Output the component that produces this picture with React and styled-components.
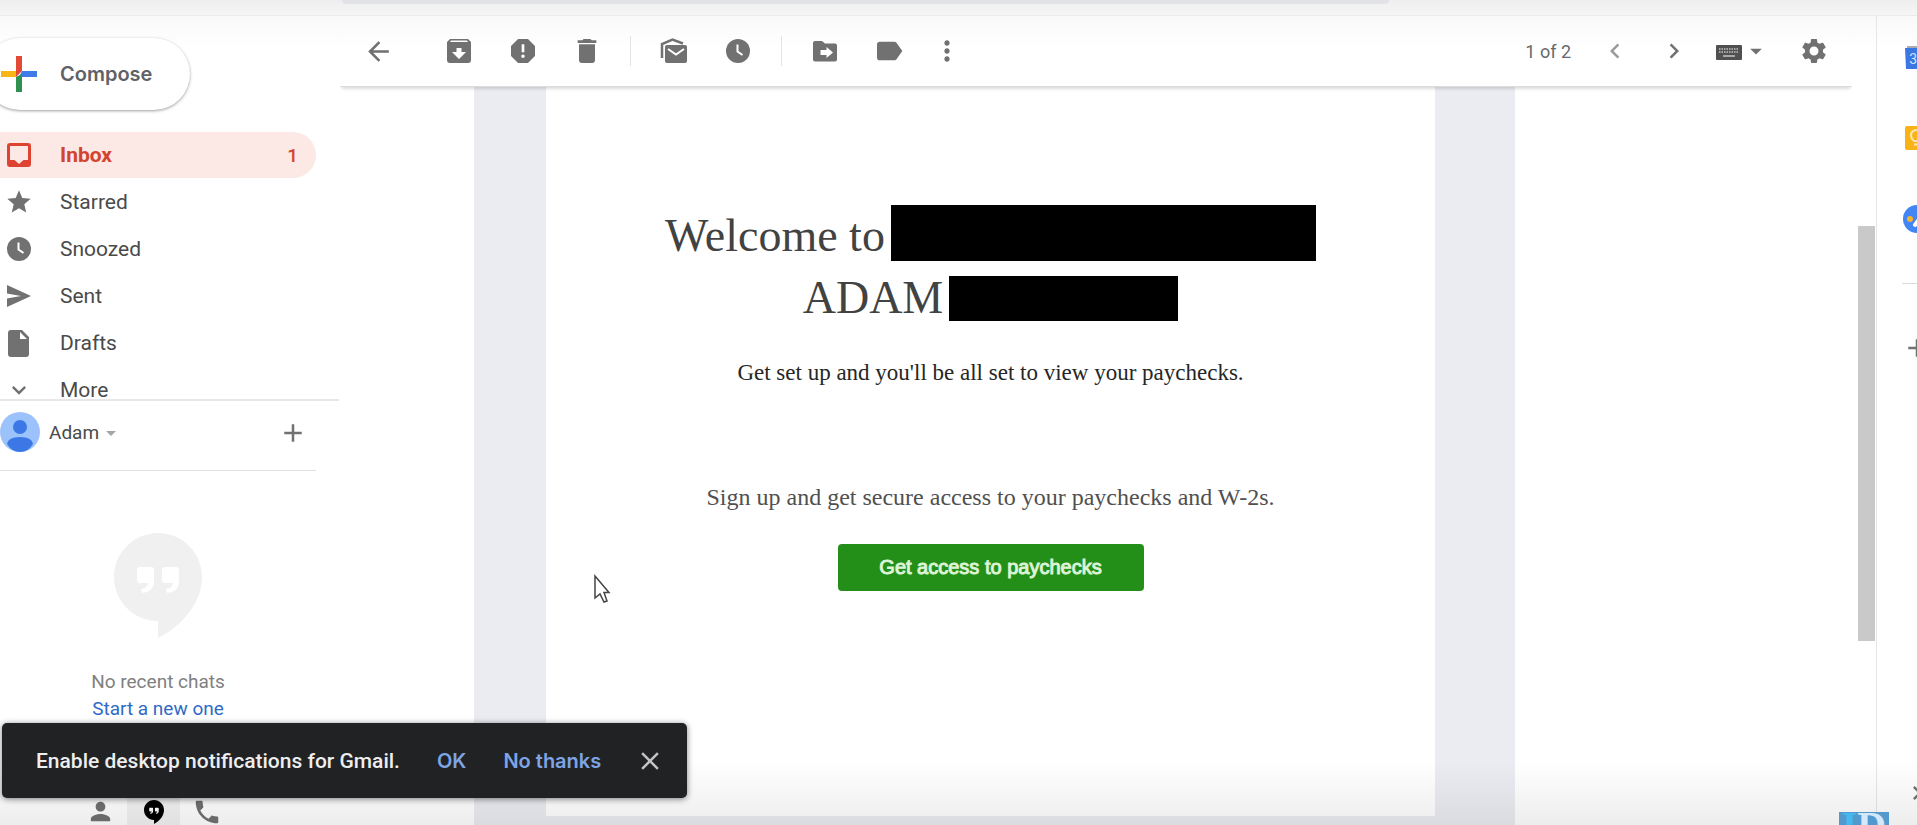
import React from "react";
import styled, { createGlobalStyle } from "styled-components";
import {
  MdArrowBack,
  MdReport,
  MdDelete,
  MdLabel,
  MdMoreVert,
  MdChevronLeft,
  MdChevronRight,
  MdArrowDropDown,
  MdSettings,
  MdStar,
  MdSend,
  MdExpandMore,
  MdAdd,
  MdClose,
  MdPerson,
  MdPhone,
} from "react-icons/md";

const GlobalStyle = createGlobalStyle`
  * { box-sizing: border-box; }
  body {
    margin: 0;
    overflow: hidden;
    background: #fff;
    font-family: Roboto, "Liberation Sans", sans-serif;
    color: #4a4a4a;
  }
  h1, p, ul { margin: 0; padding: 0; }
  button { font: inherit; color: inherit; border: 0; padding: 0; background: none; cursor: pointer; }
  svg { display: block; flex: none; }
`;

const Page = styled.div`
  position: relative;
  display: flex;
  flex-direction: column;
  height: 100vh;
  overflow: hidden;
`;

const TopStrip = styled.header`
  flex: none;
  height: 16px;
  padding: 0 528px 0 342px;
  background: linear-gradient(#eeeeee, #f6f6f6);
  border-bottom: 1px solid #ebebeb;
`;

const SearchEdge = styled.div`
  height: 4px;
  border-radius: 0 0 8px 8px;
  background: #e2e3e6;
`;

const Body = styled.div`
  flex: 1;
  min-height: 0;
  display: flex;
  background: linear-gradient(#f9f9f9, #ffffff 32px);
`;

const Sidebar = styled.aside`
  flex: none;
  width: 340px;
  display: flex;
  flex-direction: column;
  padding-top: 22px;
  overflow: hidden;
`;

const Compose = styled.button`
  flex: none;
  display: flex;
  align-items: center;
  gap: 23px;
  width: 206px;
  height: 72px;
  margin-left: -16px;
  padding-left: 17px;
  border-radius: 36px;
  background: #fff;
  box-shadow: 0 1px 3px rgba(60, 64, 67, 0.5);
  font-family: Inter, sans-serif;
  font-size: 20px;
  font-weight: 600;
  color: #5f6266;
`;

const Folders = styled.nav`
  flex: none;
  display: flex;
  flex-direction: column;
  gap: 1px;
  height: 269px;
  margin-top: 22px;
  margin-right: 1px;
  border-bottom: 2px solid #e8e8ea;
  overflow: hidden;
`;

const Folder = styled.a`
  flex: none;
  display: flex;
  align-items: center;
  width: 316px;
  height: 46px;
  padding-right: 18px;
  border-radius: 0 23px 23px 0;
  font-size: 21px;
  font-weight: ${(p) => (p.$active ? 700 : 400)};
  color: ${(p) => (p.$active ? "#d3442f" : "#4a4a4a")};
  background: ${(p) => (p.$active ? "#fce8e4" : "transparent")};
  text-decoration: none;
`;

const FolderIcon = styled.span`
  display: flex;
  justify-content: center;
  width: 38px;
  margin-right: 22px;
  color: ${(p) => (p.$active ? "#dd4330" : "#717171")};
`;

const Count = styled.span`
  margin-left: auto;
  font-size: 19px;
  font-weight: 500;
`;

const ChatUser = styled.div`
  flex: none;
  display: flex;
  align-items: center;
  width: 316px;
  height: 70px;
  padding-bottom: 6px;
  border-bottom: 1px solid #e0e0e0;
`;

const UserButton = styled.button`
  display: flex;
  align-items: center;
  font-size: 19px;
  color: #4a4a4a;
  & > span { margin-left: 8px; }
`;

const AddChat = styled.button`
  margin-left: auto;
  margin-right: 8px;
  color: #717171;
`;

const ChatEmpty = styled.section`
  flex: none;
  display: flex;
  flex-direction: column;
  align-items: center;
  width: 316px;
  padding-top: 62px;
  font-size: 19px;
  line-height: 27px;
  color: #808080;
  & > svg { margin-bottom: 30px; }
  & > a { color: #2f6ac6; text-decoration: none; }
`;

const ChatTabs = styled.div`
  flex: none;
  display: flex;
  height: 27px;
  margin-top: auto;
  padding-left: 74px;
`;

const ChatTab = styled.button`
  display: flex;
  align-items: center;
  justify-content: center;
  width: 53px;
  color: ${(p) => (p.$active ? "#000" : "#717171")};
  background: ${(p) => (p.$active ? "#f2f2f2" : "transparent")};
`;

const Main = styled.main`
  flex: 1;
  min-width: 0;
  display: flex;
  flex-direction: column;
`;

const Toolbar = styled.div`
  position: relative;
  flex: none;
  display: flex;
  align-items: center;
  height: 71px;
  margin-right: 24px;
  padding: 0 6px;
  border-bottom: 1px solid #dcdcde;
  box-shadow: 0 4px 3px -2px rgba(0, 0, 0, 0.14);
  color: #717171;
`;

const Tool = styled.button`
  display: flex;
  align-items: center;
  justify-content: center;
  width: ${(p) => p.$width || 64}px;
  height: 48px;
  color: ${(p) => (p.$faint ? "#9a9a9a" : "inherit")};
`;

const ToolGroup = styled.div`
  display: flex;
  align-items: center;
  margin-left: ${(p) => (p.$end ? "auto" : "17px")};
`;

const Divider = styled.span`
  width: 1px;
  height: 30px;
  margin: 0 11px;
  background: #e4e4e4;
`;

const Position = styled.span`
  margin-right: 14px;
  font-size: 18px;
  color: #666a6e;
`;

const Reading = styled.div`
  flex: 1;
  min-height: 0;
  display: flex;
`;

const Mail = styled.div`
  flex: 1;
  display: flex;
  margin: 0 343px 0 134px;
  padding: 0 80px 9px 72px;
  background: #ebecf1;
`;

const Letter = styled.article`
  flex: 1;
  display: flex;
  flex-direction: column;
  align-items: center;
  padding-top: 118px;
  background: #fff;
  font-family: "Liberation Serif", serif;
`;

const Title = styled.h1`
  font-size: 46px;
  line-height: 62px;
  font-weight: 400;
  color: #424242;
`;

const TitleLine = styled.span`
  display: flex;
  justify-content: center;
  gap: 6px;
`;

const Redacted = styled.span`
  width: ${(p) => p.$width}px;
  height: ${(p) => p.$height}px;
  align-self: ${(p) => p.$align};
  background: #000;
`;

const Lead = styled.p`
  margin-top: ${(p) => p.$gap}px;
  font-size: ${(p) => p.$size}px;
  line-height: 32px;
  color: ${(p) => p.$color};
`;

const AccessButton = styled.button`
  width: 306px;
  height: 47px;
  margin-top: 31px;
  border-radius: 4px;
  background: #248f18;
  color: #e6f8e2;
  font-family: "Liberation Sans", sans-serif;
  font-size: 20px;
  -webkit-text-stroke: 1px #d8f3d2;
`;

const ScrollTrack = styled.div`
  width: 18px;
  padding-top: 139px;
`;

const ScrollThumb = styled.div`
  width: 17px;
  height: 415px;
  background: #c9c9c9;
`;

const AddOns = styled.aside`
  flex: none;
  width: 41px;
  overflow: hidden;
  border-left: 1px solid #e6e6e6;
`;

const AddOnColumn = styled.div`
  display: flex;
  flex-direction: column;
  align-items: center;
  width: 80px;
  height: 100%;
  padding-top: 17px;
  padding-bottom: 8px;
  color: #717171;
`;

const AddOn = styled.button`
  display: flex;
  align-items: center;
  justify-content: center;
  width: 48px;
  height: 48px;
  margin-bottom: ${(p) => (p.$last ? 0 : 33)}px;
  margin-top: ${(p) => (p.$bottom ? "auto" : 0)};
`;

const AddOnRule = styled.div`
  width: 30px;
  height: 1px;
  margin: 40px 0;
  background: #dcdcdc;
`;

const BottomShade = styled.div`
  position: absolute;
  inset: auto 0 0 0;
  height: 64px;
  background: linear-gradient(rgba(0, 0, 0, 0), rgba(0, 0, 0, 0.07));
  pointer-events: none;
`;

const Toast = styled.div`
  position: absolute;
  left: 2px;
  bottom: 27px;
  display: flex;
  align-items: center;
  width: 685px;
  height: 75px;
  padding: 0 22px 0 34px;
  border-radius: 5px;
  background: #202224;
  box-shadow: 0 1px 6px rgba(0, 0, 0, 0.5);
  font-size: 21px;
  font-weight: 500;
  color: #eeeeee;
`;

const ToastAction = styled.button`
  margin-left: 37px;
  font-family: Inter, sans-serif;
  font-size: 20px;
  font-weight: 600;
  color: #7ea4e6;
`;

const ToastClose = styled.button`
  margin-left: auto;
  color: #c4c4c4;
`;

const Watermark = styled.div`
  position: absolute;
  right: 28px;
  bottom: 0;
  width: 50px;
  height: 13px;
  overflow: hidden;
  background: #5299cd;
  color: #d3e8fa;
  text-align: center;
  font: 700 40px/27px "Liberation Serif", serif;
  & > span { color: #45b8ee; }
`;

const Pointer = styled.svg`
  position: absolute;
  left: 593px;
  top: 574px;
`;

const Clock = () => (
  <svg width="24" height="24" viewBox="0 0 24 24">
    <circle cx="12" cy="12" r="12" fill="currentColor" />
    <path d="M11.500 5.500V12.500L16.500 16" fill="none" stroke="#fff" strokeWidth="2" />
  </svg>
);

const HangoutsMark = ({ size, fill, quote }) => (
  <svg width={size} height={Math.round((size * 105) / 88)} viewBox="0 0 88 105">
    <path
      d="M44 0C19.700 0 0 19.700 0 44S19.700 88 44 88V105C68 93 88 70 88 44C88 19.700 68.300 0 44 0Z"
      fill={fill}
    />
    <path
      d="M26 34H37Q40 34 40 37V48Q40 59 28 60L27 56Q34 55 34 50H26Q23 50 23 47V37Q23 34 26 34ZM51 34H62Q65 34 65 37V48Q65 59 53 60L52 56Q59 55 59 50H51Q48 50 48 47V37Q48 34 51 34Z"
      fill={quote}
    />
  </svg>
);

const folders = [
  {
    name: "Inbox",
    count: 1,
    icon: (
      <svg width="24" height="24" viewBox="0 0 24 24">
        <path
          fillRule="evenodd"
          fill="currentColor"
          d="M3 0H21Q24 0 24 3V21Q24 24 21 24H3Q0 24 0 21V3Q0 0 3 0ZM3 3V17H7.500L12 21L16.500 17H21V3Z"
        />
      </svg>
    ),
  },
  { name: "Starred", icon: <MdStar size={28} /> },
  { name: "Snoozed", icon: <Clock /> },
  {
    name: "Sent",
    icon: (
      <svg width="24" height="24" viewBox="0 0 24 24">
        <path d="M0 1L24 12L0 23V14.500L14 12L0 9.500Z" fill="currentColor" />
      </svg>
    ),
  },
  {
    name: "Drafts",
    icon: (
      <svg width="22" height="27" viewBox="0 0 22 27">
        <path
          fillRule="evenodd"
          fill="currentColor"
          d="M3 0H14L21 7V24Q21 27 18 27H3Q0 27 0 24V3Q0 0 3 0ZM12 2V9H19Z"
        />
      </svg>
    ),
  },
  { name: "More", icon: <MdExpandMore size={28} /> },
];

export default function App() {
  return (
    <Page>
      <GlobalStyle />
      <TopStrip>
        <SearchEdge />
      </TopStrip>
      <Body>
        <Sidebar>
          <Compose>
            <svg width="36" height="36" viewBox="0 0 36 36">
              <path d="M15 0H21V15L15 21Z" fill="#e34a35" />
              <path d="M0 15H15V21H0Z" fill="#f8b616" />
              <path d="M21 15H36V21H18Z" fill="#3f7be8" />
              <path d="M15 21L21 18V36H15Z" fill="#2f9150" />
            </svg>
            Compose
          </Compose>
          <Folders>
            {folders.map(({ name, count, icon }) => {
              const active = name === "Inbox";
              return (
                <Folder key={name} href={"#" + name.toLowerCase()} $active={active}>
                  <FolderIcon $active={active}>{icon}</FolderIcon>
                  {name}
                  {count && <Count>{count}</Count>}
                </Folder>
              );
            })}
          </Folders>
          <ChatUser>
            <UserButton>
              <svg width="41" height="41" viewBox="0 0 41 41">
                <circle cx="20" cy="20" r="20" fill="#9cc2fb" />
                <circle cx="20" cy="15" r="7" fill="#3b78e6" />
                <path d="M7 32Q8 25 20 25T33 32Q28 40 20 40T7 32Z" fill="#3b78e6" />
              </svg>
              <span>Adam</span>
              <MdArrowDropDown size={24} color="#a6a6a6" />
            </UserButton>
            <AddChat aria-label="New chat">
              <MdAdd size={30} />
            </AddChat>
          </ChatUser>
          <ChatEmpty>
            <HangoutsMark size={88} fill="#f0f0f0" quote="#fff" />
            <p>No recent chats</p>
            <a href="#new">Start a new one</a>
          </ChatEmpty>
          <ChatTabs>
            <ChatTab aria-label="Contacts">
              <MdPerson size={29} />
            </ChatTab>
            <ChatTab $active aria-label="Hangouts">
              <HangoutsMark size={20} fill="#000" quote="#fff" />
            </ChatTab>
            <ChatTab aria-label="Phone">
              <MdPhone size={30} />
            </ChatTab>
          </ChatTabs>
        </Sidebar>
        <Main>
          <Toolbar>
            <Tool aria-label="Back">
              <MdArrowBack size={31} />
            </Tool>
            <ToolGroup>
              <Tool aria-label="Archive">
                <svg width="24" height="24" viewBox="0 0 24 24">
                  <path
                    fillRule="evenodd"
                    fill="currentColor"
                    d="M3 0H21L24 3V21Q24 24 21 24H3Q0 24 0 21V3ZM4 1.500L3 3H21L20 1.500ZM9.500 9V13H5L12 20L19 13H14.500V9Z"
                  />
                </svg>
              </Tool>
              <Tool aria-label="Report spam">
                <MdReport size={32} />
              </Tool>
              <Tool aria-label="Delete">
                <MdDelete size={32} />
              </Tool>
              <Divider />
              <Tool aria-label="Mark as unread">
                <svg width="28" height="26" viewBox="0 0 28 26">
                  <path d="M2 20V6L12.500 1.500L23 5.500" fill="none" stroke="currentColor" strokeWidth="2.500" />
                  <rect x="5" y="7" width="22" height="18" rx="2" fill="currentColor" />
                  <path d="M8 11L16 16.500L24 11" fill="none" stroke="#fff" strokeWidth="2" />
                </svg>
              </Tool>
              <Tool aria-label="Snooze">
                <Clock />
              </Tool>
              <Divider />
              <Tool aria-label="Move to">
                <svg width="24" height="22" viewBox="0 0 24 22">
                  <path
                    fillRule="evenodd"
                    fill="currentColor"
                    d="M2 1H9L12 3.500H22Q24 3.500 24 5.500V19.500Q24 21.500 22 21.500H2Q0 21.500 0 19.500V3Q0 1 2 1ZM13.500 7V10H7.500V15H13.500V18L20 12.500Z"
                  />
                </svg>
              </Tool>
              <Tool aria-label="Labels">
                <MdLabel size={32} />
              </Tool>
              <Tool $width={52} aria-label="More">
                <MdMoreVert size={32} />
              </Tool>
            </ToolGroup>
            <ToolGroup $end>
              <Position>1 of 2</Position>
              <Tool $width={60} $faint aria-label="Newer">
                <MdChevronLeft size={30} />
              </Tool>
              <Tool $width={58} aria-label="Older">
                <MdChevronRight size={30} />
              </Tool>
              <Tool $width={79} aria-label="Input tools">
                <svg width="26" height="20" viewBox="0 0 26 20">
                  <rect y="4" width="26" height="15" rx="1" fill="#505050" />
                  <path
                    d="M3 8H23M3 11H23"
                    stroke="#c4c4c4"
                    strokeWidth="1.500"
                    strokeDasharray="1.500 1"
                  />
                  <path d="M7 15H19" stroke="#c4c4c4" strokeWidth="1.500" />
                </svg>
                <MdArrowDropDown size={28} />
              </Tool>
              <Tool aria-label="Settings">
                <MdSettings size={30} />
              </Tool>
            </ToolGroup>
          </Toolbar>
          <Reading>
            <Mail>
              <Letter>
                <Title>
                  <TitleLine>
                    Welcome to <Redacted $width={425} $height={56} $align="flex-start" />
                  </TitleLine>
                  <TitleLine>
                    ADAM <Redacted $width={229} $height={45} $align="center" />
                  </TitleLine>
                </Title>
                <Lead $gap={28} $size={23} $color="#262626">
                  Get set up and you'll be all set to view your paychecks.
                </Lead>
                <Lead $gap={92} $size={24} $color="#505050">
                  Sign up and get secure access to your paychecks and W-2s.
                </Lead>
                <AccessButton>Get access to paychecks</AccessButton>
              </Letter>
            </Mail>
            <ScrollTrack>
              <ScrollThumb />
            </ScrollTrack>
          </Reading>
        </Main>
        <AddOns>
          <AddOnColumn>
            <AddOn aria-label="Calendar">
              <svg width="24" height="26" viewBox="0 0 24 26">
                <path d="M2 2H22V6H2Z" fill="#a9adb3" />
                <path d="M0 4H24L23 14L24 25H1Z" fill="#3a76e4" />
                <text x="12" y="20" textAnchor="middle" fontSize="14" fill="#d5e4ff">
                  31
                </text>
              </svg>
            </AddOn>
            <AddOn aria-label="Keep">
              <svg width="24" height="24" viewBox="0 0 24 24">
                <rect width="24" height="24" rx="2" fill="#f9b316" />
                <path
                  d="M9 15Q6 12.500 6 9.500Q6 4 12 4T18 9.500Q18 12.500 15 15ZM9 18.500H15"
                  fill="none"
                  stroke="#fde7b5"
                  strokeWidth="2"
                />
              </svg>
            </AddOn>
            <AddOn $last aria-label="Tasks">
              <svg width="28" height="28" viewBox="0 0 28 28">
                <circle cx="14" cy="14" r="14" fill="#4285f4" />
                <path d="M12 20L20 9" stroke="#fff" strokeWidth="4" strokeLinecap="round" />
                <circle cx="7" cy="14" r="3" fill="#f5b32c" />
              </svg>
            </AddOn>
            <AddOnRule />
            <AddOn $last aria-label="Get add-ons">
              <MdAdd size={30} />
            </AddOn>
            <AddOn $last $bottom aria-label="Hide side panel">
              <MdChevronRight size={28} />
            </AddOn>
          </AddOnColumn>
        </AddOns>
      </Body>
      <BottomShade />
      <Toast role="status">
        Enable desktop notifications for Gmail.
        <ToastAction>OK</ToastAction>
        <ToastAction>No thanks</ToastAction>
        <ToastClose aria-label="Close">
          <MdClose size={30} />
        </ToastClose>
      </Toast>
      <Pointer width="18" height="31" viewBox="0 0 18 31">
        <path
          d="M2 2V24L7 20L11 28L14 27L11 18.500H16Z"
          fill="#fff"
          stroke="#444"
          strokeWidth="1.500"
        />
      </Pointer>
      <Watermark aria-hidden="true">
        <span>I</span>D
      </Watermark>
    </Page>
  );
}
